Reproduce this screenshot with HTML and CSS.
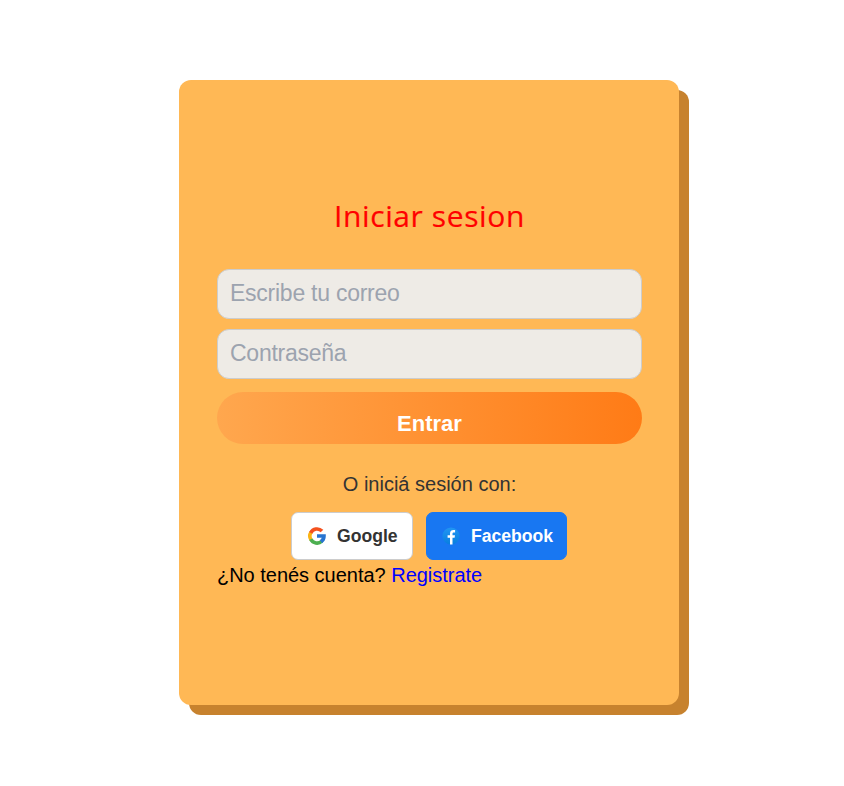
FILE: index.html
```html
<!DOCTYPE html>
<html lang="es">
<head>
<meta charset="utf-8">
<title>Iniciar sesion</title>
<link rel="stylesheet" href="styles.css">
</head>
<body>
<main class="card">
  <h1 class="title">Iniciar sesion</h1>
  <form class="form">
    <input class="field" type="email" placeholder="Escribe tu correo">
    <input class="field" type="password" placeholder="Contraseña">
    <button class="submit" type="button">Entrar</button>
  </form>
  <p class="alt">O iniciá sesión con:</p>
  <div class="social">
    <a class="btn google"><svg class="icon" viewBox="0 0 20 20"><g fill="none" stroke-width="3.6"><path stroke="#fbb414" d="M4 6.2A7 7 0 0 0 4 13.8"/><path stroke="#4caf50" d="M3.8 13.2A7 7 0 0 0 14.8 15.2"/><path stroke="#f4511e" d="M3.7 6.9A7 7 0 0 1 15 5.1"/><path stroke="#2874d0" d="M10 10H17A7 7 0 0 1 14 15.8"/></g></svg>Google</a>
    <a class="btn facebook"><svg class="icon" viewBox="0 0 20 20"><defs><linearGradient id="fb" x2="0" y2="1"><stop stop-color="#2196f3"/><stop offset="1" stop-color="#087ee0"/></linearGradient></defs><circle cx="10" cy="10" r="8.6" fill="url(#fb)"/><path fill="#fff" d="M9 18.5v-6.8H6.6V9.2H9V7.4C9 5.1 10.4 4 12.4 4h1.7v2.4h-1.2c-1 0-1.4.5-1.4 1.4v1.4H14l-.4 2.5h-2.1v6.8z"/></svg>Facebook</a>
  </div>
  <p class="signup">¿No tenés cuenta? <a class="link">Registrate</a></p>
</main>
</body>
</html>
```
FILE: styles.css
```css
* { box-sizing: border-box; }
body { margin: 0; min-height: 100vh; padding: 80px 0 0 179px; background: #fff; font-family: "Liberation Sans", Arial, sans-serif; }
.card { width: 500px; height: 625px; padding: 117px 37px 0 38px; background: #ffb855; border-radius: 12px; box-shadow: 10px 10px 0 #c7822e; }
.title { margin: 0; font: 400 30px/38px "Open Sans", sans-serif; letter-spacing: 0.6px; color: #f00; text-align: center; -webkit-text-stroke: 0.2px #f00; }
.form { display: flex; flex-direction: column; margin-top: 34px; }
.field { height: 50px; margin: 0 0 10px; padding: 0 12px 2px; border: 1px solid #ccc; border-radius: 12px; background: #eeebe6; font: 23px "Liberation Sans", sans-serif; letter-spacing: -0.25px; }
.field::placeholder { color: #9ca3af; opacity: 1; }
.submit { height: 52px; margin-top: 3px; padding: 11px 0 0; border: 0; border-radius: 26px; background: linear-gradient(90deg, #ffa74e, #ff7b16); color: #fff; font: bold 22px/1 "Liberation Sans", sans-serif; }
.alt { margin: 28px 0 0; font-size: 20px; line-height: 24px; color: #333; text-align: center; }
.social { display: flex; justify-content: center; gap: 13px; margin: 16px 1px 0 0; }
.btn { display: flex; align-items: center; gap: 10px; height: 48px; padding: 0 15px; border: 1px solid #ccc; border-radius: 7px; background: #fff; color: #333; font-size: 17.6px; font-weight: bold; }
.google { width: 122px; }
.facebook { width: 141px; padding: 0 14px; border-color: #1877f2; background: #1877f2; color: #fff; }
.icon { flex: none; width: 20px; height: 20px; }
.signup { margin: 3px 0 0; font-size: 20px; line-height: 24px; letter-spacing: -0.02px; color: #000; }
.link { color: #00f; }
```
